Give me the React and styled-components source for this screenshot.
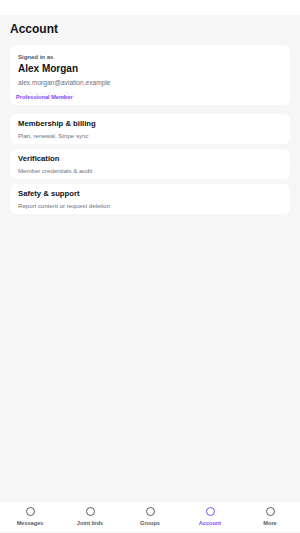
import React from 'react'
import styled, { createGlobalStyle } from 'styled-components'

const GlobalStyle = createGlobalStyle`
  html, body {
    margin: 0;
    padding: 0;
    background: #fff;
    font-family: "Liberation Sans", Arial, sans-serif;
  }
  * { box-sizing: border-box; }
`

const menu = [
  { title: 'Membership & billing', sub: 'Plan, renewal, Stripe sync' },
  { title: 'Verification', sub: 'Member credentials & audit' },
  { title: 'Safety & support', sub: 'Report content or request deletion' },
]

const tabs = ['Messages', 'Joint bids', 'Groups', 'Account', 'More']

export default function App() {
  return (
    <Page>
      <GlobalStyle />
      <TopBar />
      <Main>
        <Title>Account</Title>
        <ProfileCard>
          <Label>Signed in as</Label>
          <Name>Alex Morgan</Name>
          <Email>alex.morgan@aviation.example</Email>
          <Badge>Professional Member</Badge>
        </ProfileCard>
        <List>
          {menu.map(m => (
            <Row key={m.title}>
              <RowTitle>{m.title}</RowTitle>
              <RowSub>{m.sub}</RowSub>
            </Row>
          ))}
        </List>
      </Main>
      <TabBar>
        {tabs.map(t => (
          <Tab key={t} $active={t === 'Account'}>
            <Dot />
            <span>{t}</span>
          </Tab>
        ))}
      </TabBar>
    </Page>
  )
}

const Page = styled.div`
  height: 533px;
  display: flex;
  flex-direction: column;
  background: #f6f6f7;
`
const TopBar = styled.div`
  height: 15px;
  background: #fff;
  flex-shrink: 0;
`
const Main = styled.main`
  flex: 1;
  padding: 7px 10px 0;
`
const Title = styled.h1`
  margin: 0 0 9px;
  font-size: 12px;
  font-weight: 700;
  color: #111318;
  line-height: 14px;
`
const ProfileCard = styled.div`
  background: #fff;
  border-radius: 6px;
  padding: 8px 8px 3px;
  display: flex;
  flex-direction: column;
  align-items: flex-start;
`
const Label = styled.div`
  font-size: 6px;
  font-weight: 700;
  color: #4b5568;
  line-height: 8px;
`
const Name = styled.div`
  font-size: 10px;
  font-weight: 700;
  color: #111318;
  line-height: 12px;
  margin-top: 2px;
`
const Email = styled.div`
  font-size: 6.6px;
  color: #6b7280;
  line-height: 8px;
  margin-top: 4px;
`
const Badge = styled.div`
  font-size: 5.6px;
  font-weight: 700;
  color: #7c4dff;
  background: #faf9fc;
  border-radius: 5px;
  padding: 1px 2px;
  margin: 5px 0 0 -4px;
  line-height: 8px;
`
const List = styled.div`
  display: flex;
  flex-direction: column;
  gap: 5px;
  margin-top: 9px;
`
const Row = styled.div`
  background: #fff;
  border-radius: 6px;
  padding: 5px 8px 0;
  height: 30px;
`
const RowTitle = styled.div`
  font-size: 7.7px;
  font-weight: 700;
  color: #111318;
  line-height: 10px;
`
const RowSub = styled.div`
  font-size: 6.1px;
  color: #6b7280;
  line-height: 8px;
  margin-top: 3px;
`
const TabBar = styled.nav`
  height: 30px;
  margin-bottom: 1px;
  background: #fff;
  display: grid;
  grid-template-columns: repeat(5, 1fr);
  flex-shrink: 0;
`
const Tab = styled.div`
  display: flex;
  flex-direction: column;
  align-items: center;
  padding-top: 5px;
  gap: 3px;
  color: ${p => (p.$active ? '#7c4dff' : '#545b68')};
  font-size: 5.6px;
  font-weight: 700;
  line-height: 8px;
`
const Dot = styled.div`
  width: 9px;
  height: 9px;
  border-radius: 50%;
  border: 1px solid currentColor;
`
